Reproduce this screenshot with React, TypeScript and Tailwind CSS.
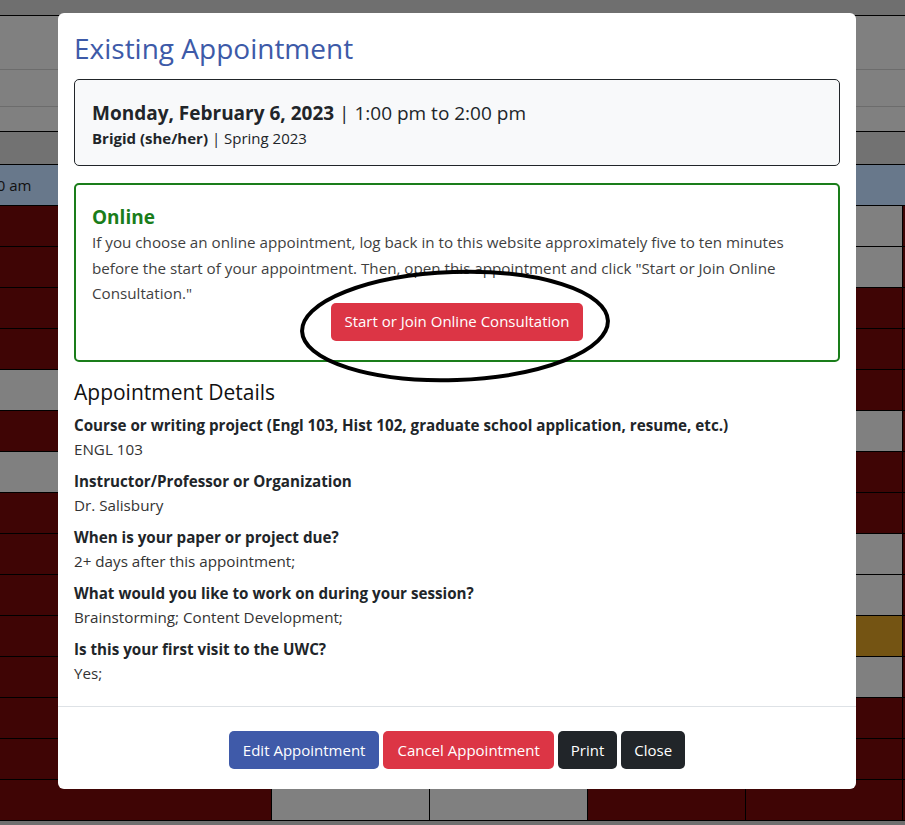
const GRAY = 'bg-[#808080]'
const RED = 'bg-[#3f0505]'
const GOLD = 'bg-[#745413]'

// calendar rows behind the backdrop: left col, right col, optional middle cells
const calRows: { left: string; right: string; mid?: string[] }[] = [
  { left: RED, right: GRAY },
  { left: RED, right: GRAY },
  { left: RED, right: RED },
  { left: RED, right: RED },
  { left: GRAY, right: RED },
  { left: RED, right: GRAY },
  { left: GRAY, right: RED },
  { left: RED, right: RED },
  { left: RED, right: GRAY },
  { left: RED, right: GRAY },
  { left: RED, right: GOLD },
  { left: RED, right: GRAY },
  { left: RED, right: RED },
  { left: RED, right: RED },
  { left: RED, right: RED, mid: [RED, GRAY, GRAY, RED] },
]

const details = [
  {
    label: 'Course or writing project (Engl 103, Hist 102, graduate school application, resume, etc.)',
    value: 'ENGL 103',
  },
  { label: 'Instructor/Professor or Organization', value: 'Dr. Salisbury' },
  { label: 'When is your paper or project due?', value: '2+ days after this appointment;' },
  { label: 'What would you like to work on during your session?', value: 'Brainstorming; Content Development;' },
  { label: 'Is this your first visit to the UWC?', value: 'Yes;' },
]

function Calendar() {
  return (
    <div className="flex flex-col">
      <div className="h-[16px] bg-[#6f6f6f] border-b border-black" />
      <div className="h-[54px] bg-[#808080] border-b border-[#6c6c6c]" />
      <div className="h-[37px] bg-[#808080] border-b border-[#6c6c6c]" />
      <div className="h-[25px] bg-[#808080] border-b border-black" />
      <div className="h-[33px] bg-[#727272] border-b border-black" />
      <div className="h-[41px] bg-[#68788b] border-b border-black flex items-center">
        <span className="-ml-[33px] text-[15px] text-[#111]">10:00 am</span>
      </div>
      {calRows.map((row, i) => (
        <div key={i} className="h-[41px] flex border-b border-black">
          <div className={`w-[114px] ${row.left}`} />
          {(row.mid ?? [RED, RED, RED, RED]).map((c, j) => (
            <div key={j} className={`w-[158px] ${c} border-r border-black`} />
          ))}
          <div className={`w-[157px] ${row.right} border-r border-black`} />
          <div className={`flex-1 ${RED}`} />
        </div>
      ))}
      <div className="flex-1 bg-[#6f6f6f]" />
    </div>
  )
}

export default function App() {
  return (
    <div className="relative w-[905px] h-[825px] overflow-hidden bg-[#6f6f6f] font-['Open_Sans',sans-serif]">
      <Calendar />

      <div className="absolute left-[58px] top-[13px] w-[798px] h-[776px] bg-white rounded-[6px] flex flex-col">
        <div className="px-4 pt-[17px] flex-1">
          <h1 className="text-[28px] leading-[36px] text-[#3d5aa8] font-medium">Existing Appointment</h1>

          <div className="mt-[13px] h-[87px] border border-[#212529] rounded-[5px] bg-[#f8f9fa] px-[17px] pt-[19px]">
            <div className="text-[19px] leading-[28px] text-[#212529]">
              <span className="font-bold">Monday, February 6, 2023</span> | 1:00 pm to 2:00 pm
            </div>
            <div className="text-[15px] leading-[22px] text-[#212529]">
              <span className="font-bold">Brigid (she/her)</span> | Spring 2023
            </div>
          </div>

          <div className="relative mt-[17px] h-[179px] border-2 border-[#1a7d1a] rounded-[5px] px-4 pt-[18px]">
            <div className="text-[19px] leading-[28px] font-bold text-[#1a7d1a]">Online</div>
            <p className="text-[15.2px] leading-[25.5px] text-[#3f3f3f] -mt-[1px]">
              If you choose an online appointment, log back in to this website approximately five to ten minutes
              before the start of your appointment. Then, open this appointment and click "Start or Join Online
              Consultation."
            </p>
            <div className="flex justify-center -mt-[4px]">
              <button className="h-[38px] px-[13px] rounded-[5px] bg-[#dc3545] text-white text-[15px]">
                Start or Join Online Consultation
              </button>
            </div>
          </div>

          <h2 className="mt-[15px] text-[21px] leading-[30px] text-[#111]">Appointment Details</h2>
          <dl className="mt-[6px] text-[15.2px] text-[#212529]">
            {details.map((d, i) => (
              <div key={i} className="mt-[8px] first:mt-0">
                <dt className="font-bold leading-[24px]">{d.label}</dt>
                <dd className="leading-[24px] text-[#333]">{d.value}</dd>
              </div>
            ))}
          </dl>
        </div>

        <div className="border-t border-[#dee2e6] h-[83px] flex justify-center items-start pt-[24px] gap-[4px]">
          <button className="h-[38px] px-[14px] rounded-[5px] bg-[#3f5aa9] text-white text-[15px]">Edit Appointment</button>
          <button className="h-[38px] px-[14px] rounded-[5px] bg-[#dc3545] text-white text-[15px]">Cancel Appointment</button>
          <button className="h-[38px] px-[13px] rounded-[5px] bg-[#212529] text-white text-[15px]">Print</button>
          <button className="h-[38px] px-[13px] rounded-[5px] bg-[#212529] text-white text-[15px]">Close</button>
        </div>
      </div>

      {/* hand drawn circle around the consult button */}
      <svg className="absolute left-[296px] top-[266px]" width="320" height="122" viewBox="0 0 320 122">
        <ellipse cx="159" cy="60" rx="153" ry="54" fill="none" stroke="black" strokeWidth="4" transform="rotate(-2 159 60)" />
      </svg>
    </div>
  )
}
